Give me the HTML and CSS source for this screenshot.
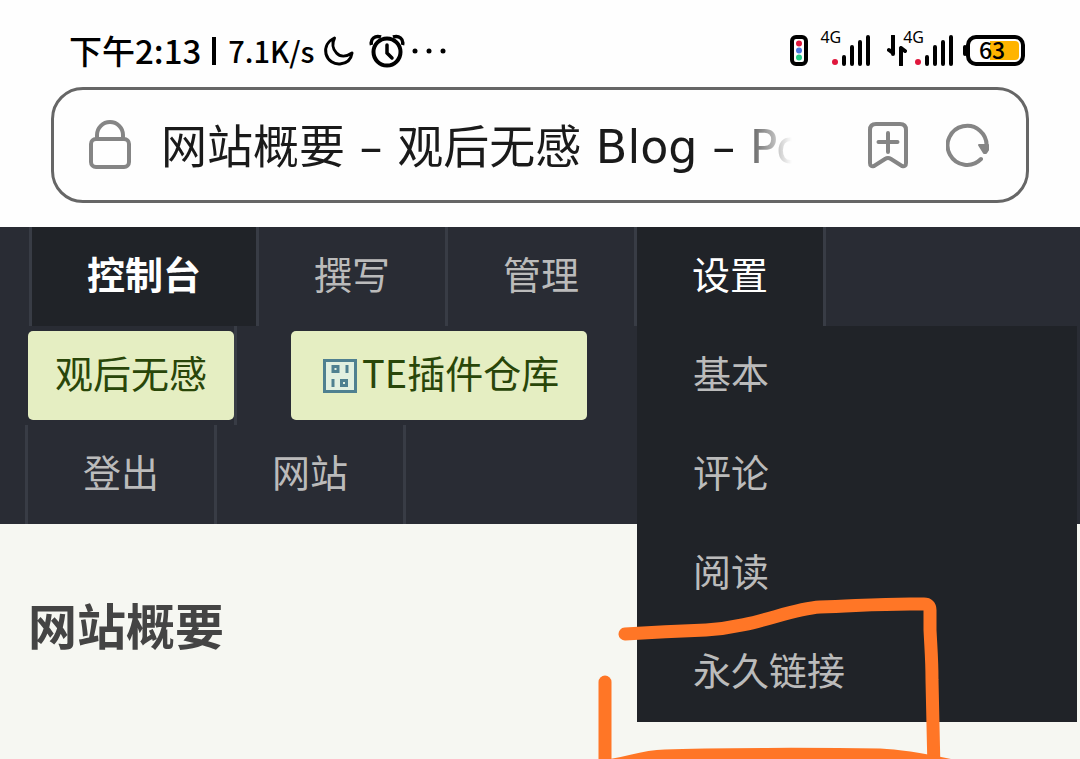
FILE: index.html
```html
<!DOCTYPE html>
<html lang="zh-CN">
<head>
<meta charset="utf-8">
<meta name="viewport" content="width=device-width, initial-scale=1">
<title>网站概要 – 观后无感 Blog</title>
<link rel="stylesheet" href="styles.css">
</head>
<body>
<div class="status">
  <div class="status-left">
    <span class="clock">下午2:13</span>
    <span class="divider"></span>
    <span class="speed">7.1K/s</span>
    <svg class="moon" width="32" height="32" viewBox="0 0 32 32" fill="none" stroke="#000" stroke-width="3" stroke-linejoin="round"><path d="M11.500 3C5 6 1.500 12 3 19C5 26 11 29.500 17 29C23 28.500 28 25 29 18C23 22 17 22 13.500 18C9.500 14 9 8 11.500 3Z"/></svg>
    <svg class="alarm" width="36" height="34" viewBox="0 0 36 34" fill="none" stroke="#000"><path d="M2.500 11C1 5 6 1 12 3M33.500 11C35 5 30 1 24 3" stroke-width="3.500"/><circle cx="18" cy="18" r="13.500" stroke-width="4"/><path d="M18 11v8l5 5" stroke-width="3.500" stroke-linecap="round"/></svg>
    <svg class="dots" width="34" height="8" viewBox="0 0 34 8"><circle cx="3" cy="4" r="2.500"/><circle cx="17" cy="4" r="2.500"/><circle cx="31" cy="4" r="2.500"/></svg>
  </div>
  <div class="status-right">
    <svg width="18" height="31" viewBox="0 0 18 31"><rect x="2" y="2" width="14" height="27" rx="4" fill="#fff" stroke="#000" stroke-width="4"/><circle cx="9" cy="8.500" r="3" fill="#e0173c"/><circle cx="9" cy="15.500" r="3" fill="#4a78e0"/><circle cx="9" cy="22.500" r="3" fill="#22cc88"/></svg>
    <div class="signal">
      <span class="network">4G</span>
      <svg width="40" height="31" viewBox="0 0 40 31"><circle cx="4" cy="27" r="3" fill="#e0173c"/><path d="M13 22v7M21 12v17M29 7v22M37 2v27" stroke="#000" stroke-width="4" stroke-linecap="round"/></svg>
    </div>
    <div class="signal signal-data">
      <svg width="20" height="31" viewBox="0 0 20 31" fill="none" stroke="#000" stroke-width="4"><path d="M6 1v18M2 15l4 3M14 30V13M18 16l-4-3" stroke-linecap="round"/></svg>
      <span class="network">4G</span>
      <svg width="40" height="31" viewBox="0 0 40 31"><circle cx="4" cy="27" r="3" fill="#e0173c"/><path d="M13 22v7M21 12v17M29 7v22M37 2v27" stroke="#000" stroke-width="4" stroke-linecap="round"/></svg>
    </div>
    <div class="battery"><span>63</span></div>
  </div>
</div>

<div class="address">
  <svg class="lock" width="42" height="50" viewBox="0 0 42 50" fill="none" stroke="#858585" stroke-width="4"><path d="M8 19v-4a13 13 0 0 1 26 0v4"/><rect x="2" y="19" width="38" height="28" rx="5"/></svg>
  <input class="url" type="text" aria-label="地址栏" value="网站概要 – 观后无感 Blog – Powered" readonly>
  <button class="tool" type="button" aria-label="添加书签"><svg width="42" height="48" viewBox="0 0 42 48" fill="none" stroke="#858585" stroke-width="4" stroke-linejoin="round"><path d="M9 3h24q6 0 6 6v33q0 4-4 3l-11-7q-3-2-6 0l-11 7q-4 1-4-3V9q0-6 6-6Z"/><path d="M21 12v19M11.500 21h19" stroke-linecap="round"/></svg></button>
  <button class="tool" type="button" aria-label="刷新"><svg width="44" height="44" viewBox="0 0 44 44" fill="none" stroke="#858585" stroke-width="4"><path d="M35 36A19.500 19.500 0 1 1 40.500 24" stroke-linecap="round"/><path d="M33 22h9v5l-2 3h-2Z" fill="#858585" stroke-width="2" stroke-linejoin="round"/></svg></button>
</div>

<nav class="nav">
  <ul class="menu">
    <li class="item current"><a href="#">控制台</a></li>
    <li class="item"><a href="#">撰写</a></li>
    <li class="item"><a href="#">管理</a></li>
    <li class="item open"><a href="#">设置</a>
      <ul class="submenu">
        <li><a href="#">基本</a></li>
        <li><a href="#">评论</a></li>
        <li><a href="#">阅读</a></li>
        <li><a href="#">永久链接</a></li>
      </ul>
    </li>
  </ul>
  <div class="plugins">
    <div class="plugin-cell"><a class="plugin" href="#">观后无感</a></div>
    <a class="plugin plugin-store" href="#"><svg width="34" height="34" viewBox="0 0 34 34" fill="none" stroke="#4f8090" stroke-width="3"><path d="M1.500 1.500h31v31h-31Z" fill="#e2f0e0"/><path d="M10 7.500h5v5h-5ZM18.500 21.500h5v5h-5ZM24 6v8M10 20v8"/></svg><span>TE插件仓库</span></a>
  </div>
  <ul class="menu account">
    <li class="item"><a href="#">登出</a></li>
    <li class="item"><a href="#">网站</a></li>
  </ul>
</nav>

<main class="main">
  <h1>网站概要</h1>
</main>

<svg class="markup" width="380" height="169" viewBox="590 590 380 169" fill="none" stroke="#ff7626" stroke-width="13" stroke-linecap="round" stroke-linejoin="round" aria-hidden="true">
  <path d="M625 634C658 632 680 631 706 630C756 627 788 609 820 607C855 606 875 604 910 604H924Q930 604 930 610V630C931 650 932 660 932 680L934 770"/>
  <path d="M605 682V770"/>
  <path d="M596 767C630 765 635 757 665 756C710 754 820 754 880 755C905 756 930 761 962 768V775H596Z" fill="#ff7626"/>
</svg>
</body>
</html>
```
FILE: styles.css
```css
* { box-sizing: border-box; }

body {
  margin: 0;
  min-height: 100vh;
  display: flex;
  flex-direction: column;
  position: relative;
  overflow: hidden;
  background: #fefefe;
  color: #444;
  font-family: "Noto Sans CJK SC", sans-serif;
}

ul { list-style: none; margin: 0; padding: 0; }
a { color: inherit; text-decoration: none; }
svg { display: block; flex: none; }

.status {
  display: flex;
  justify-content: space-between;
  align-items: center;
  height: 87px;
  padding: 14px 55px 0 69px;
  color: #000;
}
.status-left, .status-right { display: flex; align-items: center; }
.clock { padding-bottom: 2px; font-size: 33px; font-weight: 500; line-height: 40px; }
.divider { width: 4px; height: 28px; margin: 0 12px 0 11px; background: #000; }
.speed { padding-bottom: 2px; font-size: 29px; font-weight: 500; line-height: 40px; }
.moon { margin-left: 9px; }
.alarm { margin-left: 14px; }
.dots { margin-left: 7px; }

.status-right { gap: 12px; }
.signal { display: flex; }
.network { font: 16px/18px "Noto Sans", sans-serif; margin: -7px -10px 0 0; }
.signal-data { margin-left: 4px; }
.signal-data .network { margin-left: -4px; }
.battery {
  position: relative;
  width: 59px;
  height: 31px;
  border: 4px solid #000;
  border-radius: 10px;
  background: linear-gradient(90deg, #fff 18px, #ffb400 18px) content-box;
  padding: 2px;
  font-size: 23px;
  font-weight: 500;
  line-height: 16px;
}
.battery::before {
  content: "";
  position: absolute;
  left: -7px;
  top: 6px;
  width: 4px;
  height: 11px;
  background: #000;
  border-radius: 2px;
}
.battery span { display: block; padding-left: 7px; }

.address {
  display: flex;
  align-items: center;
  height: 116px;
  margin: 0 51px 24px;
  padding: 0 36px 0 35px;
  border: 3px solid #666;
  border-radius: 32px;
}
.url {
  flex: 1;
  min-width: 0;
  height: 80px;
  margin: 0 75px 0 30px;
  padding: 0 0 4px;
  border: 0;
  outline: 0;
  background: none;
  color: #1a1a1a;
  font: 46px/64px "DejaVu Sans", "Noto Sans CJK SC", sans-serif;
  -webkit-mask-image: linear-gradient(90deg, #000 calc(100% - 60px), transparent);
  mask-image: linear-gradient(90deg, #000 calc(100% - 60px), transparent);
}
.tool { padding: 0; border: 0; background: none; }
.tool + .tool { margin-left: 37px; }

.nav {
  background: #292c34;
  color: #bbb;
  font-size: 38px;
  line-height: 91px;
}
.menu { display: flex; padding-left: 29px; }
.item { position: relative; border-right: 3px solid #383c45; }
.item:first-child { border-left: 3px solid #383c45; }
.item > a { display: block; height: 99px; padding: 0 55px; }
.current, .open { background: #202328; color: #fff; }
.current { font-weight: bold; }
.submenu {
  position: absolute;
  z-index: 1;
  top: 100%;
  left: 0;
  width: 440px;
  background: #202328;
  color: #bbb;
}
.submenu a { display: block; height: 99px; padding: 0 56px; }
.account { padding-left: 25px; }

.plugins { display: flex; align-items: center; gap: 54px; padding-left: 28px; }
.plugin-cell { padding: 5px 0; border-right: 3px solid #383c45; }
.plugin {
  display: flex;
  align-items: center;
  height: 89px;
  padding: 0 27px 7px;
  border-radius: 5px;
  background: #e5eec2;
  color: #294609;
  line-height: 80px;
}
.plugin svg { margin-top: 7px; }
.plugin-store { padding-left: 32px; padding-right: 28px; gap: 5px; }

.main { flex: 1; padding: 64px 28px; background: #f6f7f2; }
h1 { margin: 0; font-size: 49px; line-height: 72px; font-weight: bold; }

.markup { position: absolute; z-index: 2; left: 590px; top: 590px; }
```
